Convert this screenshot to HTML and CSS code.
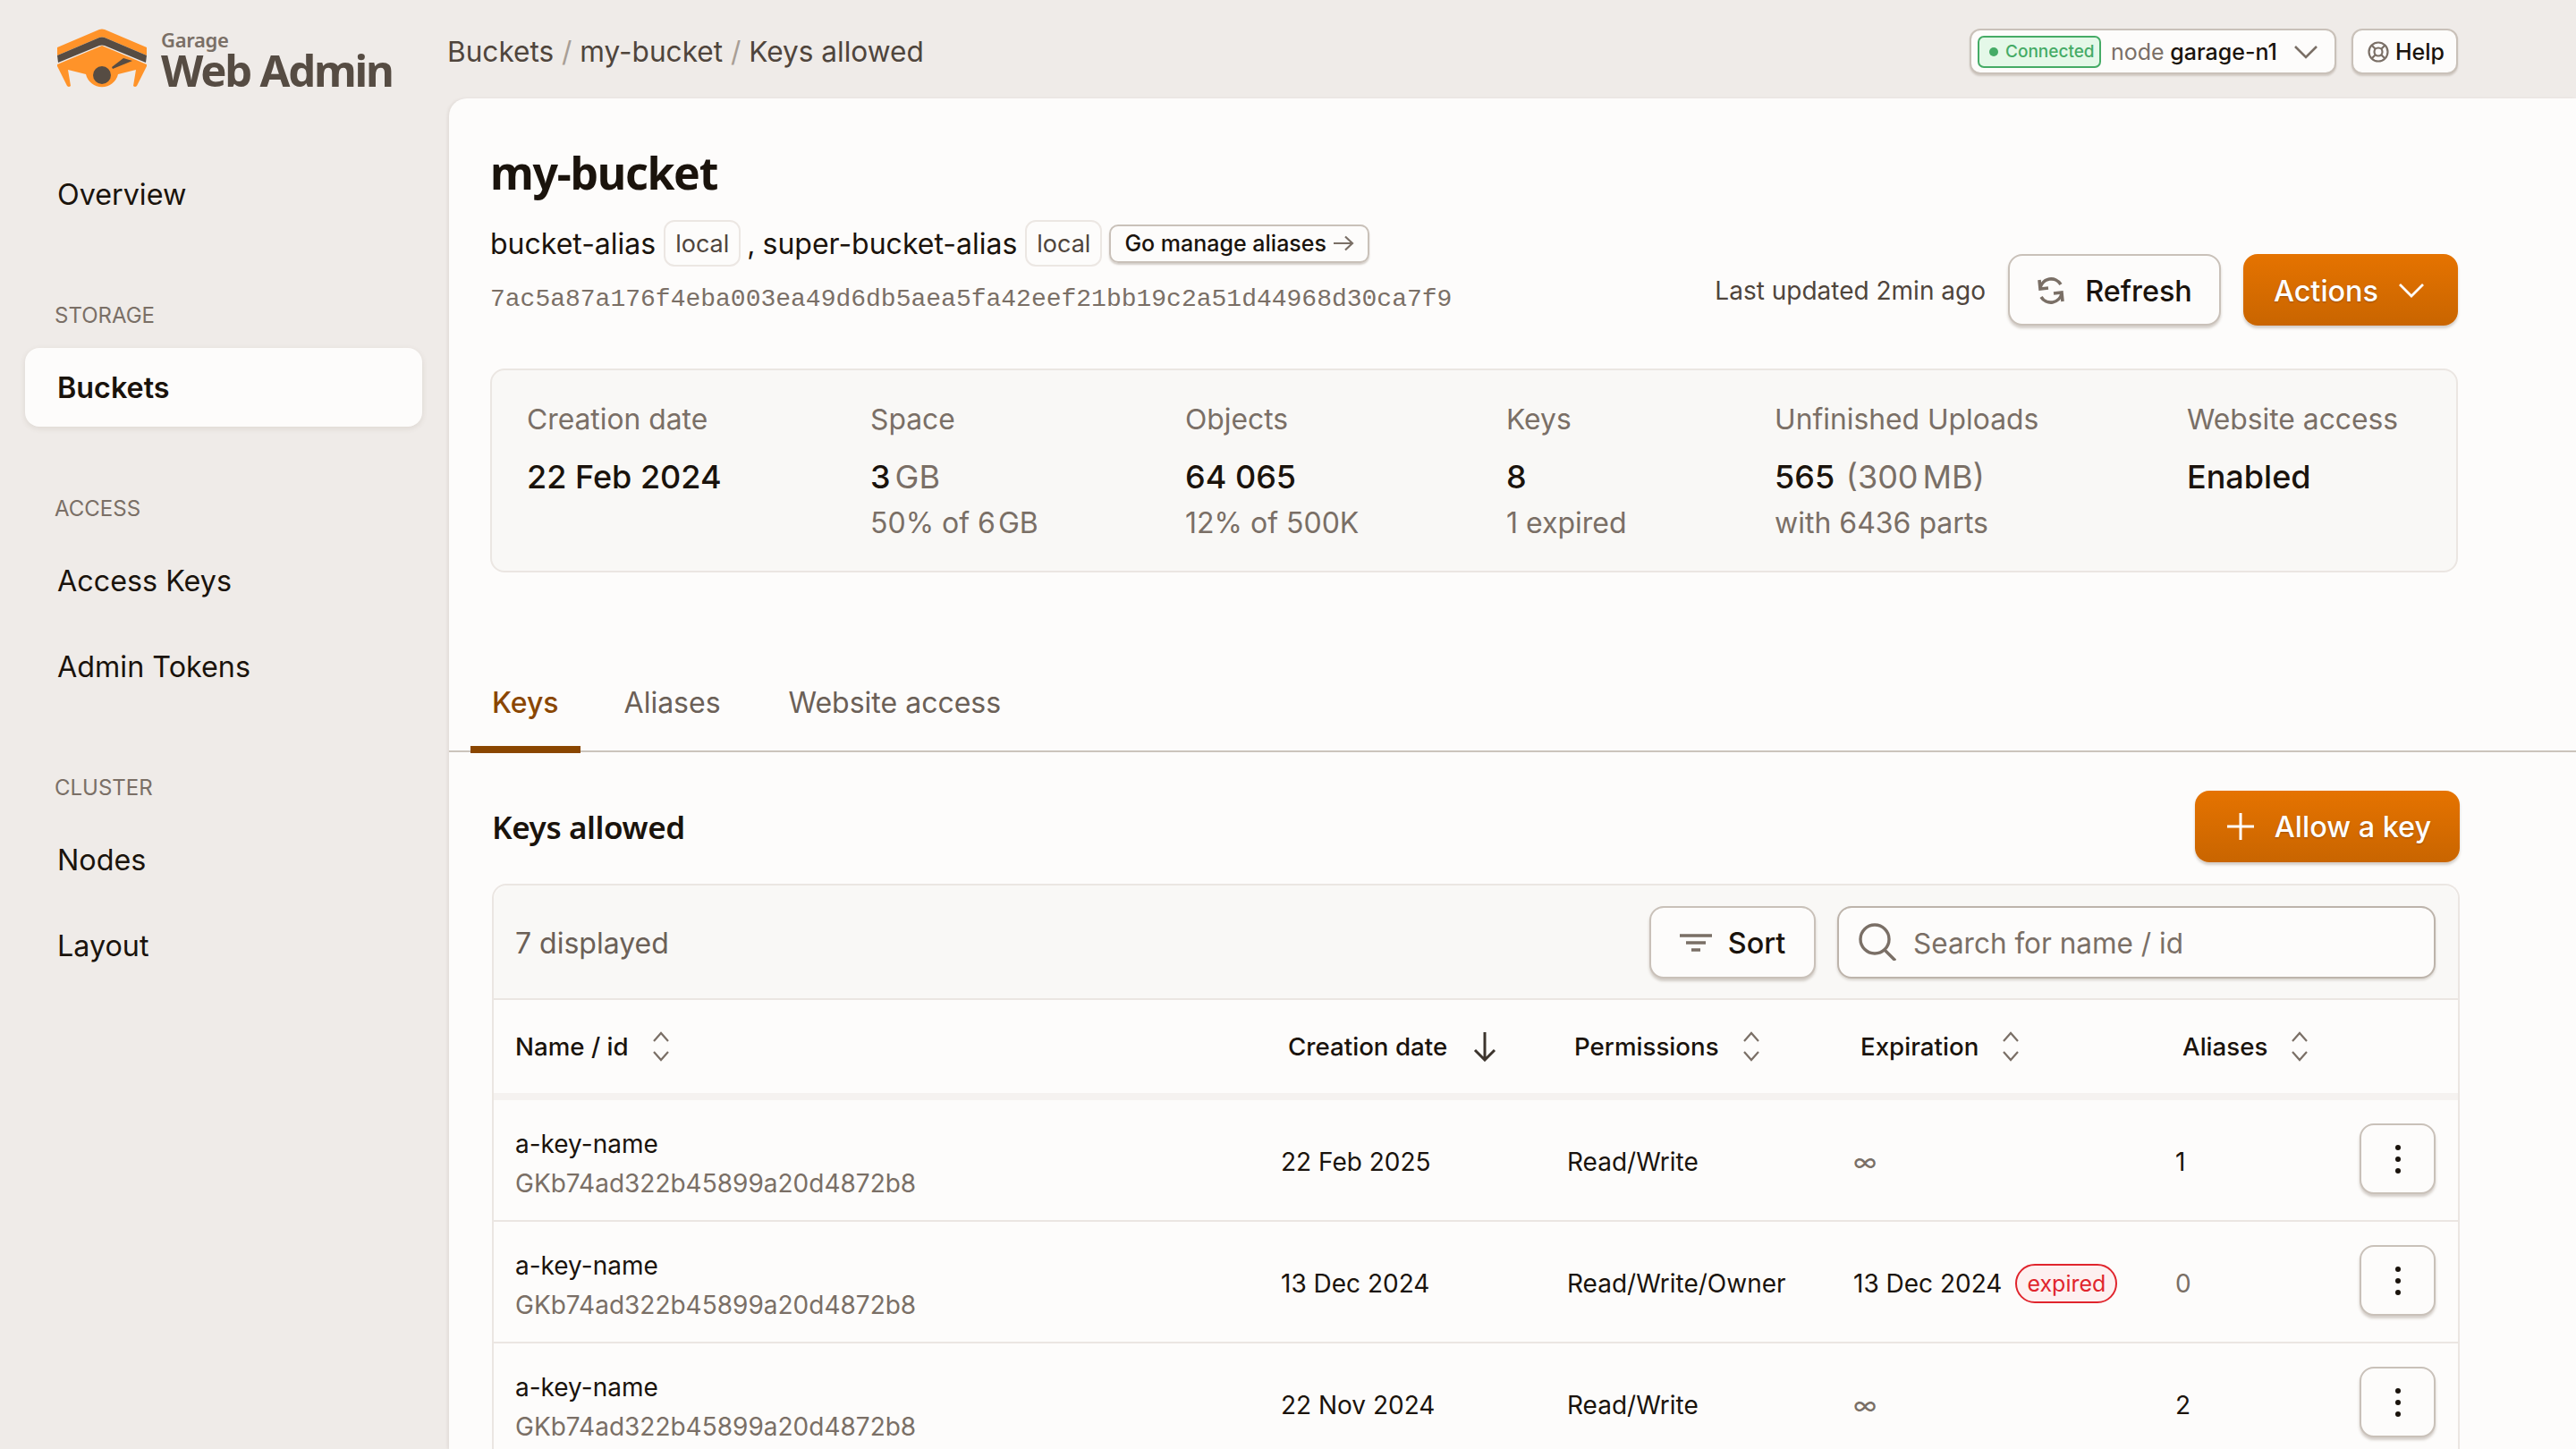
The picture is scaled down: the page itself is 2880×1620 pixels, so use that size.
FILE: index.html
```html
<!DOCTYPE html>
<html lang="en">
<head>
    <meta charset="UTF-8">
    <title>Garage Web Admin</title>
    <link rel="stylesheet" href="styles.css">
</head>
<body>
    <aside class="sidebar">
        <div class="logo">
            <svg class="logo__mark" viewBox="0 0 100 68" width="100" height="68">
                <path fill="#ff9329" d="M47 1 Q50 0 53 1 L100 21 L100 30 L53 10 Q50 9 47 10 L0 30 L0 21 Z"/>
                <path fill="#564c43" d="M47 10 Q50 9 53 10 L100 30 L99 38 L53 19 Q50 18 47 19 L1 38 L0 30 Z"/>
                <path fill="#ff9329" d="M50 19 L100 40 L100 42 L89 64 Q87 66 85 64 L88 46 L68 51 A18.5 18.5 0 0 1 32 51 L12 46 L15 64 Q13 66 11 64 L0 42 L0 40 Z"/>
                <circle fill="#564c43" cx="50" cy="52" r="10"/>
                <path fill="#564c43" d="M61 43 L74 33 L84 36 L62 45 Z"/>
            </svg>
            <div class="logo__text">
                <div class="logo__small">Garage</div>
                <div class="logo__big">Web Admin</div>
            </div>
        </div>
        <nav class="nav">
            <a class="nav__item">Overview</a>
            <div class="nav__label">STORAGE</div>
            <a class="nav__item nav__item--active">Buckets</a>
            <div class="nav__label">ACCESS</div>
            <a class="nav__item">Access Keys</a>
            <a class="nav__item">Admin Tokens</a>
            <div class="nav__label">CLUSTER</div>
            <a class="nav__item">Nodes</a>
            <a class="nav__item">Layout</a>
        </nav>
    </aside>

    <div class="main">
        <header class="topbar">
            <div class="crumbs">Buckets <span class="crumbs__sep">/</span> my-bucket <span class="crumbs__sep">/</span> Keys allowed</div>
            <div class="topbar__right">
                <div class="node-select">
                    <span class="status"><span class="status__dot"></span>Connected</span>
                    <span class="muted">node</span>&nbsp;<span>garage-n1</span>
                    <svg class="node-select__chevron" viewBox="0 0 28 16" width="28" height="16"><path d="M2 2 L14 14 L26 2" fill="none" stroke="#7a6f66" stroke-width="2.6"/></svg>
                </div>
                <div class="help">
                    <svg viewBox="0 0 24 24" width="24" height="24" fill="none" stroke="#7a6f66" stroke-width="2.2"><circle cx="12" cy="12" r="10.5"/><circle cx="12" cy="12" r="4.5"/><path d="M5 5 L9 9 M19 5 L15 9 M5 19 L9 15 M19 19 L15 15"/></svg>
                    Help
                </div>
            </div>
        </header>

        <main class="card">
            <section class="head">
                <div>
                    <h1 class="title">my-bucket</h1>
                    <div class="aliases">
                        <span>bucket-alias</span><span class="tag">local</span>
                        <span class="aliases__comma">,</span>
                        <span>super-bucket-alias</span><span class="tag">local</span>
                        <span class="btn-small">Go manage aliases
                            <svg viewBox="0 0 24 18" width="24" height="18" fill="none" stroke="#7a6f66" stroke-width="2.2"><path d="M1 9 H22 M14 1.5 L22 9 L14 16.5"/></svg>
                        </span>
                    </div>
                    <div class="hash">7ac5a87a176f4eba003ea49d6db5aea5fa42eef21bb19c2a51d44968d30ca7f9</div>
                </div>
                <div class="head__actions">
                    <span class="updated">Last updated 2min ago</span>
                    <button class="btn btn--refresh">
                        <svg viewBox="0 0 32 32" width="32" height="32" fill="none" stroke="#7a6f66" stroke-width="3.6"><path d="M4 13 A12.5 12.5 0 0 1 27 9"/><path d="M3 4 L4 14 L13 13"/><path d="M28 19 A12.5 12.5 0 0 1 5 23"/><path d="M29 28 L28 18 L19 19"/></svg>
                        Refresh
                    </button>
                    <button class="btn btn--primary btn--actions">Actions
                        <svg viewBox="0 0 30 18" width="30" height="18"><path d="M2 2 L15 15 L28 2" fill="none" stroke="#fff" stroke-width="2.8"/></svg>
                    </button>
                </div>
            </section>

            <section class="stats">
                <div class="stat">
                    <div class="stat__label">Creation date</div>
                    <div class="stat__value">22 Feb 2024</div>
                </div>
                <div class="stat">
                    <div class="stat__label">Space</div>
                    <div class="stat__value">3<span class="unit muted">GB</span></div>
                    <div class="stat__sub">50% of 6<span class="unit">GB</span></div>
                </div>
                <div class="stat">
                    <div class="stat__label">Objects</div>
                    <div class="stat__value">64 065</div>
                    <div class="stat__sub">12% of 500K</div>
                </div>
                <div class="stat">
                    <div class="stat__label">Keys</div>
                    <div class="stat__value">8</div>
                    <div class="stat__sub">1 expired</div>
                </div>
                <div class="stat">
                    <div class="stat__label">Unfinished Uploads</div>
                    <div class="stat__value">565 <span class="muted stat__paren">(300<span class="unit">MB</span>)</span></div>
                    <div class="stat__sub">with 6436 parts</div>
                </div>
                <div class="stat">
                    <div class="stat__label">Website access</div>
                    <div class="stat__value">Enabled</div>
                </div>
            </section>

            <div class="tabs">
                <a class="tab tab--active">Keys</a>
                <a class="tab">Aliases</a>
                <a class="tab tab--last">Website access</a>
            </div>

            <section class="keys">
                <div class="keys__head">
                    <h2 class="keys__title">Keys allowed</h2>
                    <button class="btn btn--primary btn--allow">
                        <svg viewBox="0 0 32 32" width="32" height="32"><path d="M16 1 V31 M1 16 H31" stroke="#fff" stroke-width="3" fill="none"/></svg>
                        Allow a key
                    </button>
                </div>

                <div class="panel">
                    <div class="toolbar">
                        <span class="toolbar__count">7 displayed</span>
                        <button class="btn btn--sort">
                            <svg viewBox="0 0 36 24" width="36" height="24" fill="none" stroke="#7a6f66" stroke-width="3.4"><path d="M0 4 H36 M7 12 H29 M13 20 H23"/></svg>
                            Sort
                        </button>
                        <div class="search">
                            <svg viewBox="0 0 42 42" width="42" height="42" fill="none" stroke="#7a6f66" stroke-width="3.4"><circle cx="18" cy="18" r="16"/><path d="M29 30 L41 42"/></svg>
                            <span>Search for name / id</span>
                        </div>
                    </div>

                    <div class="row row--header">
                        <div class="th th--first">Name / id
                            <svg class="sort" viewBox="0 0 20 34" width="20" height="34"><path d="M2 11 L10 2 L18 11 M2 23 L10 32 L18 23" fill="none" stroke="#7a6f66" stroke-width="2.2"/></svg>
                        </div>
                        <div class="th th--sorted">Creation date
                            <svg class="sort" viewBox="0 0 26 34" width="26" height="34"><path d="M13 1 V32 M2 21 L13 32 L24 21" fill="none" stroke="#3c342d" stroke-width="3"/></svg>
                        </div>
                        <div class="th">Permissions
                            <svg class="sort" viewBox="0 0 20 34" width="20" height="34"><path d="M2 11 L10 2 L18 11 M2 23 L10 32 L18 23" fill="none" stroke="#7a6f66" stroke-width="2.2"/></svg>
                        </div>
                        <div class="th">Expiration
                            <svg class="sort" viewBox="0 0 20 34" width="20" height="34"><path d="M2 11 L10 2 L18 11 M2 23 L10 32 L18 23" fill="none" stroke="#7a6f66" stroke-width="2.2"/></svg>
                        </div>
                        <div class="th">Aliases
                            <svg class="sort" viewBox="0 0 20 34" width="20" height="34"><path d="M2 11 L10 2 L18 11 M2 23 L10 32 L18 23" fill="none" stroke="#7a6f66" stroke-width="2.2"/></svg>
                        </div>
                    </div>

                    <div class="row">
                        <div class="key"><div>a-key-name</div><div class="key-id">GKb74ad322b45899a20d4872b8</div></div>
                        <div>22 Feb 2025</div>
                        <div>Read/Write</div>
                        <div class="muted">∞</div>
                        <div>1</div>
                        <button class="btn btn--dots"><i></i><i></i><i></i></button>
                    </div>
                    <div class="row">
                        <div class="key"><div>a-key-name</div><div class="key-id">GKb74ad322b45899a20d4872b8</div></div>
                        <div>13 Dec 2024</div>
                        <div>Read/Write/Owner</div>
                        <div class="exp">13 Dec 2024 <span class="expired">expired</span></div>
                        <div class="muted">0</div>
                        <button class="btn btn--dots"><i></i><i></i><i></i></button>
                    </div>
                    <div class="row">
                        <div class="key"><div>a-key-name</div><div class="key-id">GKb74ad322b45899a20d4872b8</div></div>
                        <div>22 Nov 2024</div>
                        <div>Read/Write</div>
                        <div class="muted">∞</div>
                        <div>2</div>
                        <button class="btn btn--dots"><i></i><i></i><i></i></button>
                    </div>
                </div>
            </section>
        </main>
    </div>
</body>
</html>
```

FILE: styles.css
```css
* {
    margin: 0;
    padding: 0;
    box-sizing: border-box;
}

body {
    width: 2880px;
    height: 1620px;
    overflow: hidden;
    display: flex;
    background-color: #efebe8;
    color: #1a130c;
    font-family: Inter, "Liberation Sans", sans-serif;
    font-size: 28px;
}

.muted {
    color: #7a6f66;
}

.unit {
    margin-left: 5px;
}

/* Sidebar */
.sidebar {
    width: 500px;
    flex-shrink: 0;
    padding: 32px 28px 0;
}

.logo {
    display: flex;
    gap: 16px;
    margin-left: 36px;
    height: 141px;
}

.logo__mark {
    flex-shrink: 0;
}

.logo__text {
    font-family: "Noto Sans", sans-serif;
    font-weight: 600;
}

.logo__small {
    font-size: 22px;
    line-height: 24px;
    letter-spacing: -0.3px;
    color: #7a6f66;
}

.logo__big {
    font-size: 49px;
    font-weight: 700;
    line-height: 44px;
    letter-spacing: -2.2px;
    color: #564c43;
}

.nav__item {
    display: flex;
    align-items: center;
    height: 88px;
    padding-left: 36px;
    margin-bottom: 8px;
    font-size: 32.3px;
    border-radius: 16px;
}

.nav__item--active {
    background-color: #fdfcfb;
    font-weight: 600;
    box-shadow: 0 2px 6px rgba(90, 70, 50, 0.12);
}

.nav__label {
    display: flex;
    align-items: center;
    height: 40px;
    margin: 71px 0 17px;
    padding-left: 33px;
    font-size: 24px;
    color: #7a6f66;
}

/* Top bar */
.main {
    flex: 1;
    display: flex;
    flex-direction: column;
    min-width: 0;
}

.topbar {
    height: 110px;
    flex-shrink: 0;
    display: flex;
    align-items: center;
    justify-content: space-between;
    padding-right: 132px;
    padding-top: 5px;
}

.crumbs {
    font-size: 31.6px;
    color: #4f453c;
}

.crumbs__sep {
    color: #a89e95;
}

.topbar__right {
    display: flex;
    gap: 17px;
    font-size: 25px;
    font-weight: 500;
}

.node-select,
.help {
    display: flex;
    align-items: center;
    height: 51px;
    background-color: #fdfcfb;
    border: 2px solid #c9c1b9;
    border-radius: 12px;
    box-shadow: 0 2px 2px rgba(90, 70, 50, 0.2);
}

.node-select {
    width: 410px;
    padding-left: 7px;
}

.node-select .muted {
    font-weight: 400;
}

.status {
    display: flex;
    align-items: center;
    height: 36px;
    width: 138px;
    margin-right: 11px;
    padding-left: 11px;
    gap: 8px;
    background-color: #e4f8e8;
    border: 2px solid #45ab66;
    border-radius: 7px;
    color: #45ab66;
    font-size: 19px;
    font-weight: 500;
}

.status__dot {
    width: 10px;
    height: 10px;
    border-radius: 50%;
    background-color: #45ab66;
}

.node-select__chevron {
    margin-left: 18px;
}

.help {
    width: 119px;
    padding-left: 16px;
    gap: 7px;
}

/* Main card */
.card {
    flex: 1;
    margin-left: 2px;
    background-color: #fdfcfb;
    border-top-left-radius: 20px;
    box-shadow: -2px 0 3px rgba(90, 70, 50, 0.08);
    overflow: hidden;
}

.head {
    display: flex;
    justify-content: space-between;
    align-items: flex-end;
    padding: 48px 132px 0 46px;
    height: 254px;
}

.title {
    font-family: "Noto Sans", sans-serif;
    font-size: 50px;
    font-weight: 700;
    line-height: 70px;
    letter-spacing: -1.3px;
}

.aliases {
    display: flex;
    align-items: center;
    height: 56px;
    margin-top: 16px;
    font-size: 32px;
}

.tag {
    display: flex;
    align-items: center;
    height: 52px;
    padding: 0 11px;
    margin-left: 9px;
    border: 2px solid #ece7e3;
    border-radius: 12px;
    font-size: 27px;
    color: #4f453c;
}

.aliases__comma {
    margin: 0 8px 0 7px;
}

.btn-small {
    display: flex;
    align-items: center;
    gap: 7px;
    height: 43px;
    margin-left: 8px;
    padding: 0 15px;
    font-size: 25px;
    font-weight: 500;
    border: 2px solid #c9c1b9;
    border-radius: 10px;
    box-shadow: 0 2px 2px rgba(90, 70, 50, 0.25);
}

.hash {
    font-family: "Liberation Mono", monospace;
    font-size: 28px;
    line-height: 40px;
    margin-top: 15px;
    margin-bottom: 9px;
    color: #7a6f66;
}

.head__actions {
    display: flex;
    align-items: center;
    gap: 25px;
}

.updated {
    color: #4f453c;
    padding-top: 2px;
}

.btn {
    display: flex;
    align-items: center;
    justify-content: center;
    font-family: inherit;
    font-size: 32.4px;
    font-weight: 500;
    color: #1a130c;
    background-color: #fdfcfb;
    border: 2px solid #c9c1b9;
    border-radius: 16px;
    box-shadow: 0 3px 3px rgba(90, 70, 50, 0.25);
}

.btn--refresh {
    width: 238px;
    height: 80px;
    gap: 22px;
    padding-top: 2px;
}

.btn--primary {
    color: #fff;
    border: 0;
    background: linear-gradient(#e57300, #c96500);
    text-shadow: 0 1px 2px rgba(0, 0, 0, 0.25);
}

.btn--actions {
    width: 240px;
    height: 80px;
    gap: 22px;
    padding: 2px 3px 0 0;
}

/* Stats */
.stats {
    display: grid;
    grid-template-columns: 384px 352px 359px 300px 461px 1fr;
    height: 228px;
    margin: 48px 132px 0 46px;
    padding: 35px 0 0 39px;
    background-color: #f9f8f6;
    border: 2px solid #ebe6e2;
    border-radius: 16px;
}

.stat__label {
    line-height: 40px;
    font-size: 31.8px;
    color: #7a6f66;
}

.stat__value {
    line-height: 40px;
    margin-top: 24px;
    font-size: 36px;
    font-weight: 500;
}

.stat__value .muted {
    font-weight: 400;
}

.stat__paren {
    margin-left: 3px;
}

.stat__sub {
    line-height: 40px;
    margin-top: 12px;
    font-size: 32px;
    color: #7a6f66;
}

.stat__sub .unit {
    margin-left: 3px;
}

/* Tabs */
.tabs {
    display: flex;
    gap: 25px;
    height: 91px;
    margin-top: 110px;
    padding-left: 24px;
    border-bottom: 2px solid #cbc4bc;
}

.tab {
    height: 92px;
    padding: 14px 24px 0;
    font-size: 32px;
    line-height: 44px;
    color: #6b6057;
}

.tab--active {
    color: #8a4600;
    font-weight: 500;
    border-bottom: 8px solid #8a4600;
}

.tab--last {
    margin-left: 3px;
}

/* Keys section */
.keys {
    padding: 43px 130px 0 48px;
}

.keys__head {
    display: flex;
    align-items: center;
    justify-content: space-between;
    height: 80px;
}

.keys__title {
    font-family: "Noto Sans", sans-serif;
    font-size: 35px;
    font-weight: 600;
    letter-spacing: -0.4px;
}

.btn--allow {
    width: 296px;
    height: 80px;
    gap: 22px;
    padding-left: 3px;
}

.panel {
    margin-top: 24px;
    border: 2px solid #ebe6e2;
    border-bottom: 0;
    border-radius: 16px 16px 0 0;
}

.toolbar {
    display: flex;
    align-items: center;
    height: 128px;
    padding: 0 25px 0 24px;
    background-color: #f9f8f6;
    border-bottom: 2px solid #ebe6e2;
    border-radius: 16px 16px 0 0;
}

.toolbar__count {
    flex: 1;
    padding-top: 2px;
    font-size: 32px;
    color: #6b6057;
}

.btn--sort {
    width: 186px;
    height: 81px;
    gap: 18px;
    padding-top: 2px;
}

.search {
    display: flex;
    align-items: center;
    gap: 19px;
    width: 669px;
    height: 81px;
    margin-left: 24px;
    padding-left: 22px;
    font-size: 31.5px;
    color: #7a6f66;
    background-color: #fdfcfb;
    border: 2px solid #bdb4ab;
    border-radius: 16px;
    box-shadow: 0 2px 3px rgba(90, 70, 50, 0.2);
}

.search span {
    padding-top: 2px;
}

.row {
    display: grid;
    grid-template-columns: 856px 320px 320px 360px 1fr auto;
    align-items: center;
    height: 136px;
    padding: 4px 25px 0 24px;
    border-bottom: 2px solid #ebe6e2;
    line-height: 44px;
}

.row--header {
    height: 112px;
    padding-top: 0;
    border-bottom: 8px solid #f5f2f0;
    font-size: 27.7px;
    font-weight: 500;
}

.th {
    display: flex;
    align-items: center;
    gap: 26px;
    padding-left: 8px;
}

.th--first {
    padding-left: 0;
}

.th--sorted {
    gap: 29px;
}

.key {
    padding-top: 3px;
}

.key-id {
    color: #7a6f66;
}

.exp {
    display: flex;
    align-items: center;
    gap: 15px;
}

.expired {
    display: flex;
    align-items: center;
    height: 44px;
    padding: 0 11px;
    font-size: 25px;
    color: #e0252d;
    background-color: #fdf0f0;
    border: 2px solid #e0252d;
    border-radius: 22px;
}

.btn--dots {
    flex-direction: column;
    gap: 7px;
    width: 85px;
    height: 79px;
    margin-bottom: 7px;
}

.btn--dots i {
    width: 6px;
    height: 6px;
    border-radius: 50%;
    background-color: #1a130c;
}
```
